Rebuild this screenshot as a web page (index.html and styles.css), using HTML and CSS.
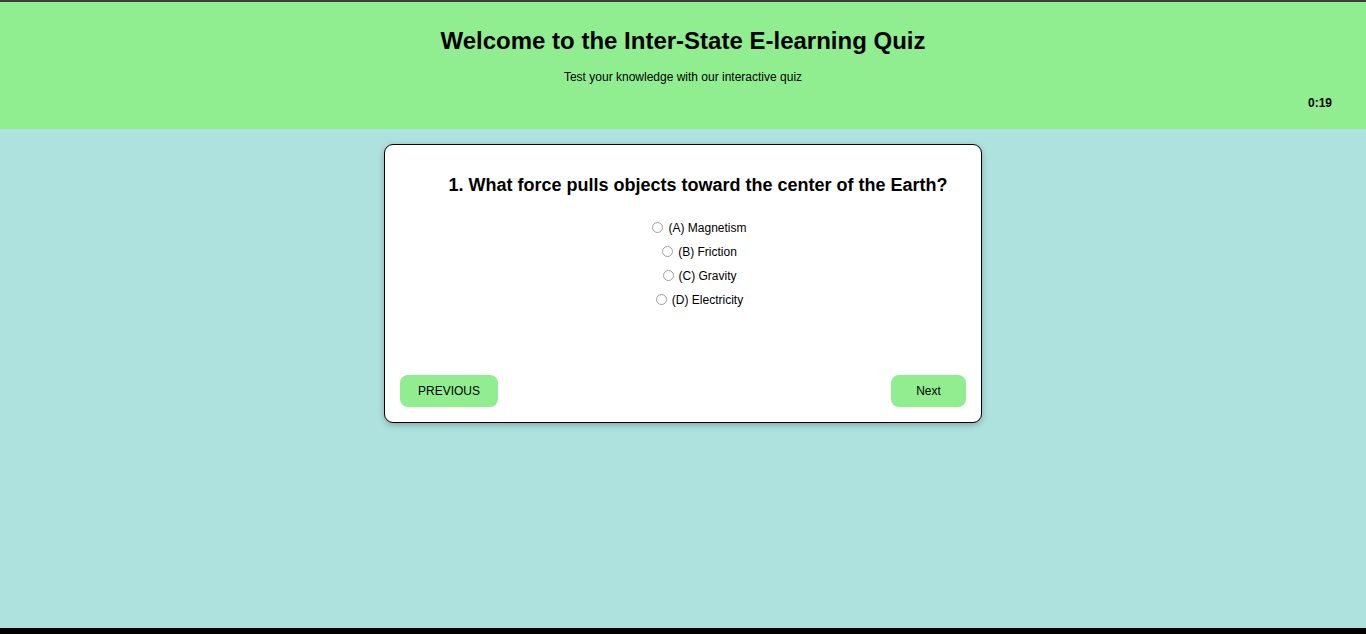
FILE: index.html
```html
<!DOCTYPE html>
<html>
<head>
<meta charset="utf-8">
<link rel="stylesheet" href="styles.css">
</head>
<body>
<div class="topline"></div>
<header class="header">
  <h1 class="title">Welcome to the Inter-State E-learning Quiz</h1>
  <p class="subtitle">Test your knowledge with our interactive quiz</p>
  <div class="timer-row"><span class="timer">0:19</span></div>
</header>
<main class="main">
  <section class="card">
    <div class="content">
      <h2 class="question">1. What force pulls objects toward the center of the Earth?</h2>
      <div class="options">
        <label class="option"><input type="radio" name="q1"> (A) Magnetism</label>
        <label class="option"><input type="radio" name="q1"> (B) Friction</label>
        <label class="option"><input type="radio" name="q1"> (C) Gravity</label>
        <label class="option"><input type="radio" name="q1"> (D) Electricity</label>
      </div>
    </div>
    <div class="nav">
      <button class="btn btn-prev">PREVIOUS</button>
      <button class="btn btn-next">Next</button>
    </div>
  </section>
</main>
<div class="bottomline"></div>
</body>
</html>
```
FILE: styles.css
```css
html, body {
  margin: 0;
  padding: 0;
  height: 100%;
}
body {
  font-family: "Liberation Sans", Arial, sans-serif;
  background: #aee2de;
  display: flex;
  flex-direction: column;
  color: #000;
}
.topline {
  height: 2px;
  background: #3c3c3c;
  flex: none;
}
.header {
  background: #90ee90;
  height: 127px;
  flex: none;
  display: flex;
  flex-direction: column;
  align-items: center;
  box-sizing: border-box;
  padding-top: 25px;
}
.title {
  margin: 0;
  font-size: 24px;
  font-weight: bold;
  line-height: 28px;
}
.subtitle {
  margin: 15px 0 0;
  font-size: 12px;
  line-height: 14px;
}
.timer-row {
  align-self: stretch;
  display: flex;
  justify-content: flex-end;
  padding-right: 34px;
  margin-top: 12px;
}
.timer {
  font-size: 12px;
  font-weight: bold;
  line-height: 14px;
}
.main {
  flex: 1;
  display: flex;
  justify-content: center;
  align-items: flex-start;
  padding-top: 15px;
}
.card {
  width: 598px;
  height: 279px;
  box-sizing: border-box;
  background: #fff;
  border: 1px solid #000;
  border-radius: 9px;
  box-shadow: 0 2px 6px rgba(0,0,0,0.25);
  padding: 0 15px 15px;
  display: flex;
  flex-direction: column;
}
.content {
  flex: 1;
  padding-left: 30px;
  display: flex;
  flex-direction: column;
  align-items: center;
}
.question {
  margin: 29px 0 0;
  font-size: 18px;
  font-weight: bold;
  line-height: 22px;
}
.options {
  margin-top: 23px;
  padding-left: 3px;
  display: flex;
  flex-direction: column;
  align-items: center;
  gap: 6px;
}
.option {
  font-size: 12px;
  line-height: 18px;
  display: flex;
  align-items: center;
}
.option input {
  margin: 0 5px 2px 0;
  width: 11px;
  height: 11px;
  opacity: 0.7;
}
.nav {
  display: flex;
  justify-content: space-between;
}
.btn {
  background: #90ee90;
  border: none;
  border-radius: 8px;
  height: 32px;
  font-family: "Liberation Sans", Arial, sans-serif;
  font-size: 12px;
  color: #000;
  padding: 0;
}
.btn-prev { width: 98px; }
.btn-next { width: 75px; }
.bottomline {
  height: 6px;
  background: #000;
  flex: none;
}
```
